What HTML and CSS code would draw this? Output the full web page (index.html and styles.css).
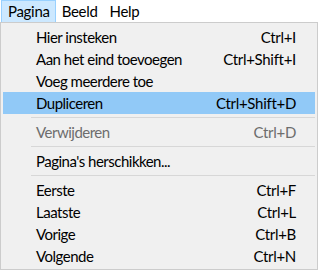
FILE: index.html
```html
<!DOCTYPE html>
<html>
<head>
<meta charset="utf-8">
<link rel="stylesheet" href="styles.css">
</head>
<body>
<div class="menubar">
  <div class="top-item open">Pagina</div>
  <div class="top-item">Beeld</div>
  <div class="top-item">Help</div>
</div>
<div class="dropdown">
  <div class="item"><span class="label">Hier insteken</span><span class="key">Ctrl+I</span></div>
  <div class="item"><span class="label">Aan het eind toevoegen</span><span class="key">Ctrl+Shift+I</span></div>
  <div class="item"><span class="label">Voeg meerdere toe</span><span class="key"></span></div>
  <div class="item active"><span class="label">Dupliceren</span><span class="key">Ctrl+Shift+D</span></div>
  <div class="sep"></div>
  <div class="item disabled"><span class="label">Verwijderen</span><span class="key">Ctrl+D</span></div>
  <div class="sep"></div>
  <div class="item"><span class="label">Pagina's herschikken...</span><span class="key"></span></div>
  <div class="sep"></div>
  <div class="item"><span class="label">Eerste</span><span class="key">Ctrl+F</span></div>
  <div class="item"><span class="label">Laatste</span><span class="key">Ctrl+L</span></div>
  <div class="item"><span class="label">Vorige</span><span class="key">Ctrl+B</span></div>
  <div class="item"><span class="label">Volgende</span><span class="key">Ctrl+N</span></div>
</div>
</body>
</html>
```
FILE: styles.css
```css
html, body {
  margin: 0;
  padding: 0;
  background: #ffffff;
}
body {
  width: 318px;
  height: 270px;
  overflow: hidden;
  font-family: Lato, "Noto Sans", sans-serif;
  font-size: 15px;
  color: #000000;
}
.menubar {
  display: flex;
  height: 22px;
  background: #ffffff;
}
.top-item {
  height: 22px;
  line-height: 20px;
  padding: 0 5px;
  box-sizing: border-box;
  border: 1px solid transparent;
  letter-spacing: -0.3px;
}
.top-item.open {
  margin-left: 1px;
  padding-left: 6px;
  background: #cce8ff;
  border-color: #99d1ff;
  border-bottom: none;
}
.dropdown {
  box-sizing: border-box;
  height: 248px;
  background: #f0f0f0;
  border: 1px solid #cccccc;
  padding: 3px 2px 2px 2px;
}
.item {
  display: flex;
  justify-content: space-between;
  align-items: center;
  box-sizing: border-box;
  height: 22px;
  padding: 0 19px 1px 33px;
}
.label {
  letter-spacing: -0.5px;
}
.item.active {
  background: #91c9f7;
}
.item.disabled {
  color: #6d6d6d;
}
.key {
  letter-spacing: -0.3px;
}
.sep {
  height: 7px;
  display: flex;
  align-items: center;
  padding-left: 28px;
}
.sep::before {
  content: "";
  flex: 1;
  height: 1px;
  background: #d7d7d7;
}
```
